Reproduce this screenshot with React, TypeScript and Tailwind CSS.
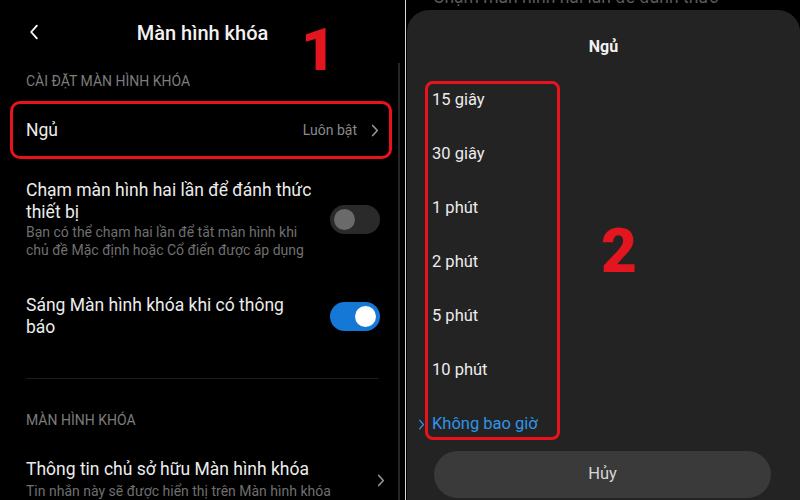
import React from 'react';

const font = { fontFamily: 'Roboto, "Noto Sans", sans-serif' };

const Chevron = ({ className }: { className?: string }) => (
  <svg viewBox="0 0 8 14" className={className} fill="none" stroke="currentColor" strokeWidth={1.6} strokeLinecap="round" strokeLinejoin="round">
    <path d="M1.5 1.5 L6.5 7 L1.5 12.5" />
  </svg>
);

const Toggle = ({ on }: { on: boolean }) => (
  <div
    className={`flex h-[29px] w-[50px] shrink-0 items-center rounded-full px-[4px] ${
      on ? 'justify-end bg-[#1578d6]' : 'justify-start bg-[#2a2a2a]'
    }`}
  >
    <div className={`h-[21px] w-[21px] rounded-full ${on ? 'bg-white' : 'bg-[#6a6a6a]'}`} />
  </div>
);

const SettingsPanel = () => (
  <div className="relative h-full w-[405px] shrink-0 bg-black">
    {/* header */}
    <div className="relative flex h-[66px] items-center justify-center">
      <Chevron className="absolute left-[28px] top-[24px] h-[16px] w-[12px] rotate-180 text-white" />
      <span className="text-[20px] font-medium text-[#f2f2f2]">Màn hình khóa</span>
    </div>
    <div className="flex h-[30px] items-center px-[26px] text-[14px] text-[#7c7c7c]">CÀI ĐẶT MÀN HÌNH KHÓA</div>

    <div className="mx-[10px] mt-[5px] flex h-[58px] w-[382px] items-center rounded-[10px] border-[3px] border-[#e8131c] pl-[13px] pr-[10px]">
      <span className="flex-1 text-[17.5px] text-[#ececec]">Ngủ</span>
      <span className="text-[14px] text-[#8a8a8a]">Luôn bật</span>
      <Chevron className="ml-[14px] h-[13px] w-[8px] text-[#9a9a9a]" />
    </div>

    <div className="mt-[20px] flex items-center pl-[26px] pr-[25px]">
      <div className="flex-1">
        <div className="text-[17.5px] leading-[22px] text-[#ececec]">
          Chạm màn hình hai lần để đánh thức
          <br />
          thiết bị
        </div>
        <div className="text-[14px] leading-[18px] text-[#6f6f6f]">
          Bạn có thể chạm hai lần để tắt màn hình khi
          <br />
          chủ đề Mặc định hoặc Cổ điển được áp dụng
        </div>
      </div>
      <Toggle on={false} />
    </div>

    <div className="mt-[35px] flex items-center pl-[26px] pr-[25px]">
      <div className="flex-1 text-[17.5px] leading-[22px] text-[#ececec]">
        Sáng Màn hình khóa khi có thông
        <br />
        báo
      </div>
      <Toggle on={true} />
    </div>

    <div className="mx-[26px] mt-[40px] h-px bg-[#1c1c1c]" />
    <div className="mt-[26px] flex h-[30px] items-center px-[26px] text-[14px] text-[#7c7c7c]">MÀN HÌNH KHÓA</div>

    <div className="mt-[23px] flex items-center pl-[26px] pr-[20px]">
      <div className="flex-1">
        <div className="text-[17.5px] leading-[22px] text-[#ececec]">Thông tin chủ sở hữu Màn hình khóa</div>
        <div className="text-[14px] leading-[22px] text-[#6f6f6f]">Tin nhắn này sẽ được hiển thị trên Màn hình khóa</div>
      </div>
      <Chevron className="h-[13px] w-[8px] text-[#9a9a9a]" />
    </div>

    {/* scrollbar */}
    <div className="absolute left-[398px] top-[63px] h-[437px] w-[2px] bg-[#262626]" />
    {/* annotation */}
    <span className="absolute left-[301px] top-[20px] text-[60px] font-black leading-none text-[#e3161f]">1</span>
  </div>
);

const options = ['15 giây', '30 giây', '1 phút', '2 phút', '5 phút', '10 phút'];

const SleepSheet = () => (
  <div className="flex h-full flex-1 flex-col bg-black">
    <div className="h-[10px] overflow-hidden px-[26px]">
      <div className="-mt-[14px] whitespace-nowrap text-[17.5px] leading-[22px] text-[#5a5a5a]">Chạm màn hình hai lần để đánh thức</div>
    </div>
    <div className="relative flex-1 rounded-t-[22px] bg-[#232323]">
      <div className="h-[63px] pt-[26px] text-center text-[16px] font-bold leading-[22px] text-[#f2f2f2]">Ngủ</div>
      {options.map((o) => (
        <div key={o} className="flex h-[54px] items-center pl-[25px] text-[16.5px] text-[#ececec]">
          {o}
        </div>
      ))}
      <div className="flex h-[54px] items-center pl-[11px] text-[16.5px] text-[#2e95ea]">
        <Chevron className="mr-[7px] h-[11px] w-[7px]" />
        Không bao giờ
      </div>
      <button className="ml-[27px] flex h-[47px] w-[337px] items-center justify-center rounded-full bg-[#3a3a3a] text-[16.5px] text-[#d6d6d6]">
        Hủy
      </button>

      {/* annotations */}
      <div className="absolute left-[18px] top-[71px] h-[359px] w-[135px] rounded-[8px] border-[3px] border-[#e8131c]" />
      <span className="absolute left-[194px] top-[210px] text-[62px] font-black leading-none text-[#e3161f]">2</span>
    </div>
  </div>
);

export default function App() {
  return (
    <div className="flex h-[500px] w-[800px] overflow-hidden bg-black" style={font}>
      <SettingsPanel />
      <div className="h-full w-px bg-[#d8d8d8]" />
      <div className="h-full w-px bg-black" />
      <SleepSheet />
    </div>
  );
}
